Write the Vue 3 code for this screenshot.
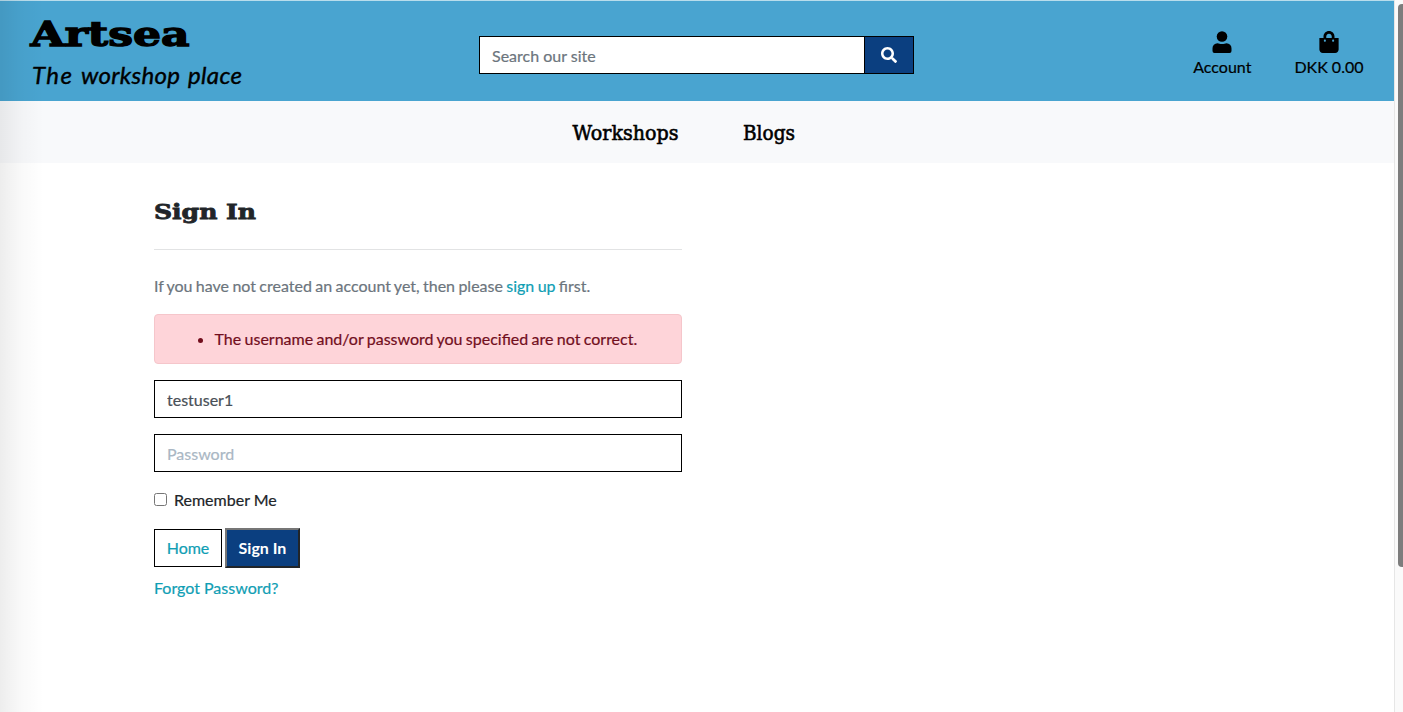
<script setup>
import { ref } from 'vue'

const search = ref('')
const username = ref('testuser1')
const password = ref('')
const remember = ref(false)
</script>

<template>
  <div class="window">
    <div class="page">
      <header class="header">
        <a class="brand">
          <svg width="230" height="90" viewBox="0 0 230 90">
            <text class="wordmark" x="10.500" y="39.300" textLength="159" lengthAdjust="spacingAndGlyphs">Artsea</text>
            <text class="tagline">
              <tspan x="12" y="77" textLength="40" lengthAdjust="spacing">The</tspan>
              <tspan x="61" y="77" textLength="99" lengthAdjust="spacing">workshop</tspan>
              <tspan x="168" y="77" textLength="54" lengthAdjust="spacing">place</tspan>
            </text>
          </svg>
        </a>
        <form class="search" @submit.prevent>
          <input v-model="search" class="field" type="text" placeholder="Search our site" />
          <button class="search-button" type="submit">
            <svg width="16" height="16" viewBox="0 0 512 512" fill="currentColor">
              <path d="M505 442.700 405.300 343c-4.500-4.500-10.600-7-17-7H372c27.600-35.300 44-79.700 44-128C416 93.100 322.900 0 208 0S0 93.100 0 208s93.100 208 208 208c48.300 0 92.700-16.400 128-44v16.300c0 6.400 2.500 12.500 7 17l99.700 99.700c9.400 9.400 24.600 9.400 33.900 0l28.300-28.300c9.400-9.400 9.400-24.600.1-34zM208 336c-70.700 0-128-57.200-128-128 0-70.700 57.200-128 128-128 70.700 0 128 57.200 128 128 0 70.700-57.200 128-128 128z" />
            </svg>
          </button>
        </form>
        <div class="links">
          <a class="link account">
            <svg width="20" height="22" viewBox="0 0 20 22">
              <circle cx="10" cy="5.500" r="5.300" />
              <path d="M.5 21v-3.500a5 5 0 0 1 5-5.300c1.500 0 2.300.8 4.500.8s3-.8 4.500-.8a5 5 0 0 1 5 5.300V20a1.900 1.900 0 0 1-1.900 1.900H2.400A1.900 1.900 0 0 1 .5 20z" />
            </svg>
            <span>Account</span>
          </a>
          <a class="link bag">
            <svg width="20" height="22" viewBox="0 0 448 512">
              <path d="M352 160v-32C352 57.420 294.579 0 224 0 153.420 0 96 57.420 96 128v32H0v272c0 44.183 35.817 80 80 80h288c44.183 0 80-35.817 80-80V160h-96zm-192-32c0-35.290 28.710-64 64-64s64 28.710 64 64v32H160v-32zm160 120c-13.255 0-24-10.745-24-24s10.745-24 24-24 24 10.745 24 24-10.745 24-24 24zm-192 0c-13.255 0-24-10.745-24-24s10.745-24 24-24 24 10.745 24 24-10.745 24-24 24z" />
            </svg>
            <span>DKK 0.00</span>
          </a>
        </div>
      </header>

      <nav class="nav">
        <a><svg width="107" height="32"><text x="0.500" y="22" textLength="106" lengthAdjust="spacingAndGlyphs">Workshops</text></svg></a>
        <a><svg width="52" height="32"><text x="0" y="22" textLength="52" lengthAdjust="spacingAndGlyphs">Blogs</text></svg></a>
      </nav>

      <main class="content">
        <h3 class="title">
          <svg width="110" height="34"><text x="0" y="23" textLength="102" lengthAdjust="spacingAndGlyphs">Sign In</text></svg>
        </h3>
        <hr />
        <p class="intro">If you have not created an account yet, then please <a>sign up</a> first.</p>
        <form @submit.prevent>
          <div class="alert">
            <ul><li>The username and/or password you specified are not correct.</li></ul>
          </div>
          <input v-model="username" class="field" type="text" placeholder="Username" />
          <input v-model="password" class="field password" type="password" placeholder="Password" />
          <label class="remember"><input v-model="remember" type="checkbox" /><span>Remember Me</span></label>
          <div class="actions">
            <a class="home">Home</a>
            <button class="submit" type="submit">Sign In</button>
          </div>
          <a class="forgot">Forgot Password?</a>
        </form>
      </main>
    </div>
    <div class="scrollbar"><div class="thumb"></div></div>
    <div class="edge-shade"></div>
  </div>
</template>

<style>
body { margin: 0; overflow: hidden; }
</style>

<style scoped>
* { box-sizing: border-box; }
.window {
  position: relative;
  display: flex;
  width: 1403px;
  height: 712px;
  overflow: hidden;
  background: #fff;
  color: #212529;
  font: 400 16px/24px Lato, sans-serif;
  -webkit-text-stroke: 0.2px currentColor;
}
.page { width: 1394px; }
.header {
  display: flex;
  height: 101px;
  border-top: 1px solid #b9ddec;
  background: #49a4d0;
  color: #000;
}
.brand { width: 459px; padding: 6px 0 0 20px; }
svg { display: block; overflow: visible; }
.wordmark { font: 700 33px "DejaVu Serif", serif; stroke: #000; stroke-width: 1.3px; }
.tagline { font: italic 400 24px Lato, cursive; stroke: #000; stroke-width: 0.4px; }
.search { display: flex; width: 435px; height: 38px; margin: 35px 0 0 20px; }
.field {
  display: block;
  width: 100%;
  height: 38px;
  margin: 0;
  padding: 6px 12px;
  border: 1px solid #000;
  border-radius: 0;
  outline: 0;
  background: #fff;
  color: #495057;
  font: inherit;
  -webkit-text-stroke: inherit;
}
.field::placeholder { color: #6c757d; opacity: 1; }
.search .field { width: 386px; }
.search-button {
  display: flex;
  width: 49px;
  height: 38px;
  padding: 0 1px 0 0;
  align-items: center;
  justify-content: center;
  border: 1px solid #000;
  border-left: 0;
  background: #0b3f80;
  color: #fff;
}
.links { display: flex; margin: 30px 30.500px 0 auto; gap: 43px; }
.link { display: flex; flex-direction: column; align-items: center; line-height: 24px; }
.link span { margin-top: 2px; white-space: nowrap; }
.nav {
  display: flex;
  height: 62px;
  padding: 17px 0 0 572px;
  gap: 64px;
  background: #f8f9fb;
  color: #000;
  font: 400 20px "DejaVu Serif", serif;
}
.nav text { fill: currentColor; stroke: currentColor; stroke-width: 0.6px; }
.content { width: 682px; padding: 33px 0 0 154px; }
.title { height: 34px; margin: 0; }
.title text { font: 700 21px "DejaVu Serif", serif; fill: #212529; stroke: #212529; stroke-width: 0.8px; }
hr { height: 1px; margin: 19px 0 24px; border: 0; background: #e2e3e4; }
.intro { margin: 0 0 16px; color: #6c757d; white-space: nowrap; word-spacing: -0.75px; }
.intro a, .forgot, .home { color: #109eb4; }
.alert {
  height: 50px;
  margin-bottom: 16px;
  padding: 12px 20px;
  border: 1px solid #f5c6cb;
  border-radius: 4px;
  background: #fed4d9;
  color: #720e1d;
  word-spacing: -0.75px;
}
.alert ul { margin: 0; padding: 0 0 0 39.500px; }
.field + .field { margin-top: 16px; }
.password::placeholder { color: #aab7c4; }
.remember { display: flex; margin-top: 16px; align-items: center; }
.remember input { width: 13px; height: 13px; margin: 0 7px 2px 0; }
.actions { display: flex; margin-top: 16px; align-items: center; gap: 3px; }
.home { width: 68px; height: 38px; padding: 6px 0 0; border: 1px solid #000; text-align: center; }
.submit {
  width: 75px;
  height: 40px;
  padding: 0;
  border: 2px solid;
  border-color: #767676 #212529 #212529 #767676;
  border-radius: 0;
  background: #0b3f80;
  color: #fff;
  font: 700 16px/24px Lato, sans-serif;
  -webkit-text-stroke: 0;
}
.forgot { display: block; margin-top: 8px; }
.scrollbar { width: 9px; padding: 4px 0 0 3px; border-left: 1px solid #e6e6e6; background: #fafafa; }
.thumb { height: 563px; border-radius: 4px 0 0 4px; background: #7d7d7d; }
.edge-shade {
  position: absolute;
  inset: 0 auto 0 0;
  width: 44px;
  background: linear-gradient(90deg, rgba(0, 0, 0, 0.07), rgba(0, 0, 0, 0.025) 50%, transparent);
  pointer-events: none;
}
</style>
